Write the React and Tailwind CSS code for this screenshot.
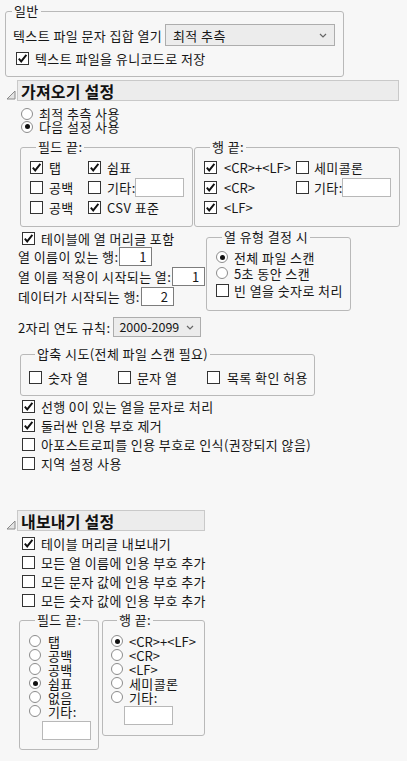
import React from 'react';

const Check = ({ on }) => (
  <span className="w-[13px] h-[13px] border border-[#333] bg-white flex items-center justify-center shrink-0">
    {on && (
      <svg width="11" height="11" viewBox="0 0 11 11">
        <path d="M1.8 5.6 L4.2 8.4 L9.4 1.8" fill="none" stroke="#111" strokeWidth="1.9" />
      </svg>
    )}
  </span>
);

const Radio = ({ on }) => (
  <span className="w-[12px] h-[12px] rounded-full border border-[#8c8c8c] bg-white flex items-center justify-center shrink-0">
    {on && <span className="w-[5px] h-[5px] rounded-full bg-[#111]" />}
  </span>
);

const Group = ({ title, className, children }) => (
  <fieldset className={`border border-[#b9b9b9] rounded-[3px] ${className}`}>
    <legend className="ml-[6px] px-[2px] leading-[14px]">{title}</legend>
    {children}
  </fieldset>
);

const TextBox = ({ className = '' }) => (
  <span className={`block w-[49px] h-[19px] border border-[#b8b8b8] bg-white ${className}`} />
);

const NumBox = ({ value }) => (
  <span className="ml-[1px] w-[33px] h-[19px] border border-[#7d7d7d] bg-white flex items-center justify-end pr-[5px] tracking-normal">
    {value}
  </span>
);

const Chevron = () => (
  <svg width="8" height="5" viewBox="0 0 8 5">
    <path d="M1 1 L4 4 L7 1" fill="none" stroke="#666" strokeWidth="1.2" />
  </svg>
);

const Header = ({ title, width }) => (
  <div className="flex items-center pl-[6px]">
    <svg width="10" height="10" viewBox="0 0 10 10" className="mt-[8px]">
      <path d="M9 1 L9 9 L1 9 Z" fill="#e4e4e4" stroke="#8a8a8a" strokeWidth="1" />
    </svg>
    <div className={`ml-[1px] h-[21px] border border-[#c9c9c9] bg-[#ececec] flex items-center pl-[3px] text-[16px] tracking-[0.2px] font-bold leading-none text-[#111] ${width}`}>
      {title}
    </div>
  </div>
);

const CheckRow = ({ on, children, className = 'h-[19px]' }) => (
  <div className={`flex items-center gap-[6px] pl-[22px] ${className}`}>
    <Check on={on} />
    <span>{children}</span>
  </div>
);

const RadioRow = ({ on, children, className = '', textClass = '' }) => (
  <div className={`flex items-center gap-[6px] ${className}`}>
    <Radio on={on} />
    <span className={`block leading-[13px] ${textClass}`}>{children}</span>
  </div>
);

export default function App() {
  return (
    <div className="w-[407px] h-[761px] overflow-hidden bg-[#f7f7f7] text-[13px] tracking-[0.4px] leading-none text-[#161616] font-['Noto_Sans_CJK_KR','Malgun_Gothic',sans-serif]">
      <div className="pt-[4px]">
        {/* 일반 */}
        <Group title="일반" className="ml-[5px] w-[339px] pb-[10px]">
          <div className="mt-[6px] h-[22px] flex items-center pl-[7px] pr-[8px]">
            <span className="flex-1">텍스트 파일 문자 집합 열기</span>
            <div className="w-[170px] h-[22px] border border-[#adadad] bg-[#ececec] flex items-center justify-between pl-[7px] pr-[7px]">
              <span>최적 추측</span>
              <Chevron />
            </div>
          </div>
          <div className="mt-[4px] h-[16px] flex items-center gap-[6px] pl-[10px]">
            <Check on />
            <span>텍스트 파일을 유니코드로 저장</span>
          </div>
        </Group>

        {/* 가져오기 설정 */}
        <div className="mt-[3px]">
          <Header title="가져오기 설정" width="w-[382px]" />
        </div>
        <div className="mt-[6px] pl-[21px]">
          <RadioRow className="h-[13px]">최적 추측 사용</RadioRow>
          <RadioRow on className="h-[13px]">다음 설정 사용</RadioRow>
        </div>

        <div className="mt-[7px] ml-[20px] flex gap-[1px]">
          <Group title="필드 끝:" className="w-[173px] pt-[3px] pb-[9px] pl-[9px]">
            <div className="flex h-[20px] items-center">
              <div className="w-[58px] flex items-center gap-[6px]"><Check on /><span>탭</span></div>
              <div className="flex items-center gap-[6px]"><Check on /><span>쉼표</span></div>
            </div>
            <div className="flex h-[20px] items-center">
              <div className="w-[58px] flex items-center gap-[6px]"><Check /><span>공백</span></div>
              <div className="flex items-center gap-[6px]"><Check /><span>기타:</span><TextBox className="-ml-[7px]" /></div>
            </div>
            <div className="flex h-[20px] items-center">
              <div className="w-[58px] flex items-center gap-[6px]"><Check /><span>공백</span></div>
              <div className="flex items-center gap-[6px]"><Check on /><span>CSV 표준</span></div>
            </div>
          </Group>
          <Group title="행 끝:" className="w-[206px] pt-[3px] pb-[9px] pl-[9px]">
            <div className="flex h-[20px] items-center">
              <div className="w-[92px] flex items-center gap-[7px]"><Check on /><span className="tracking-normal">&lt;CR&gt;+&lt;LF&gt;</span></div>
              <div className="flex items-center gap-[5px]"><Check /><span>세미콜론</span></div>
            </div>
            <div className="flex h-[20px] items-center">
              <div className="w-[92px] flex items-center gap-[7px]"><Check on /><span className="tracking-normal">&lt;CR&gt;</span></div>
              <div className="flex items-center gap-[5px]"><Check /><span>기타:</span><TextBox className="-ml-[6px]" /></div>
            </div>
            <div className="flex h-[20px] items-center">
              <div className="w-[92px] flex items-center gap-[7px]"><Check on /><span className="tracking-normal">&lt;LF&gt;</span></div>
            </div>
          </Group>
        </div>

        <div className="mt-[3px] flex">
          <div className="w-[206px]">
            <CheckRow on className="h-[16px]">테이블에 열 머리글 포함</CheckRow>
            <div className="h-[20px] flex items-center pl-[18px]"><span>열 이름이 있는 행:</span><NumBox value="1" /></div>
            <div className="h-[20px] flex items-center pl-[18px]"><span>열 이름 적용이 시작되는 열:</span><NumBox value="1" /></div>
            <div className="h-[20px] flex items-center pl-[18px]"><span>데이터가 시작되는 행:</span><NumBox value="2" /></div>
          </div>
          <Group title="열 유형 결정 시" className="w-[145px] pt-[5px] pb-[11px] pl-[9px]">
            <RadioRow on className="h-[16px] gap-[5px]">전체 파일 스캔</RadioRow>
            <RadioRow className="h-[16px] gap-[5px]">5초 동안 스캔</RadioRow>
            <div className="h-[18px] flex items-center gap-[5px]"><Check /><span>빈 열을 숫자로 처리</span></div>
          </Group>
        </div>

        <div className="mt-[6px] h-[20px] flex items-center pl-[18px]">
          <span>2자리 연도 규칙:</span>
          <div className="ml-[3px] w-[88px] h-[20px] border border-[#adadad] bg-[#ececec] flex items-center justify-between pl-[5px] pr-[6px]">
            <span className="tracking-normal text-[12.5px]">2000-2099</span>
            <Chevron />
          </div>
        </div>

        <Group title="압축 시도(전체 파일 스캔 필요)" className="mt-[10px] ml-[20px] w-[295px] pt-[8px] pb-[10px] pl-[8px]">
          <div className="h-[16px] flex items-center">
            <div className="w-[89px] flex items-center gap-[6px]"><Check /><span>숫자 열</span></div>
            <div className="w-[89px] flex items-center gap-[6px]"><Check /><span>문자 열</span></div>
            <div className="flex items-center gap-[7px]"><Check /><span>목록 확인 허용</span></div>
          </div>
        </Group>

        <div className="mt-[1px]">
          <CheckRow on>선행 0이 있는 열을 문자로 처리</CheckRow>
          <CheckRow on>둘러싼 인용 부호 제거</CheckRow>
          <CheckRow>아포스트로피를 인용 부호로 인식(권장되지 않음)</CheckRow>
          <CheckRow>지역 설정 사용</CheckRow>
        </div>

        {/* 내보내기 설정 */}
        <div className="mt-[37px]">
          <Header title="내보내기 설정" width="w-[188px]" />
        </div>
        <div className="mt-[3px]">
          <CheckRow on>테이블 머리글 내보내기</CheckRow>
          <CheckRow>모든 열 이름에 인용 부호 추가</CheckRow>
          <CheckRow>모든 문자 값에 인용 부호 추가</CheckRow>
          <CheckRow>모든 숫자 값에 인용 부호 추가</CheckRow>
        </div>

        <div className="mt-[3px] ml-[19px] flex items-start gap-[3px]">
          <Group title="필드 끝:" className="w-[80px] pt-[7px] pb-[9px] pl-[9px]">
            <RadioRow className="h-[14px] gap-[7px]">탭</RadioRow>
            <RadioRow className="h-[14px] gap-[7px]">공백</RadioRow>
            <RadioRow className="h-[14px] gap-[7px]">공백</RadioRow>
            <RadioRow on className="h-[14px] gap-[7px]">쉼표</RadioRow>
            <RadioRow className="h-[14px] gap-[7px]">없음</RadioRow>
            <RadioRow className="h-[14px] gap-[7px]">기타:</RadioRow>
            <TextBox className="mt-[3px] ml-[13px]" />
          </Group>
          <Group title="행 끝:" className="w-[103px] pt-[7px] pb-[10px] pl-[8px]">
            <RadioRow on className="h-[14px]" textClass="tracking-normal">&lt;CR&gt;+&lt;LF&gt;</RadioRow>
            <RadioRow className="h-[14px]" textClass="tracking-normal">&lt;CR&gt;</RadioRow>
            <RadioRow className="h-[14px]" textClass="tracking-normal">&lt;LF&gt;</RadioRow>
            <RadioRow className="h-[14px]">세미콜론</RadioRow>
            <RadioRow className="h-[14px]">기타:</RadioRow>
            <TextBox className="mt-[2px] ml-[13px]" />
          </Group>
        </div>
      </div>
    </div>
  );
}
